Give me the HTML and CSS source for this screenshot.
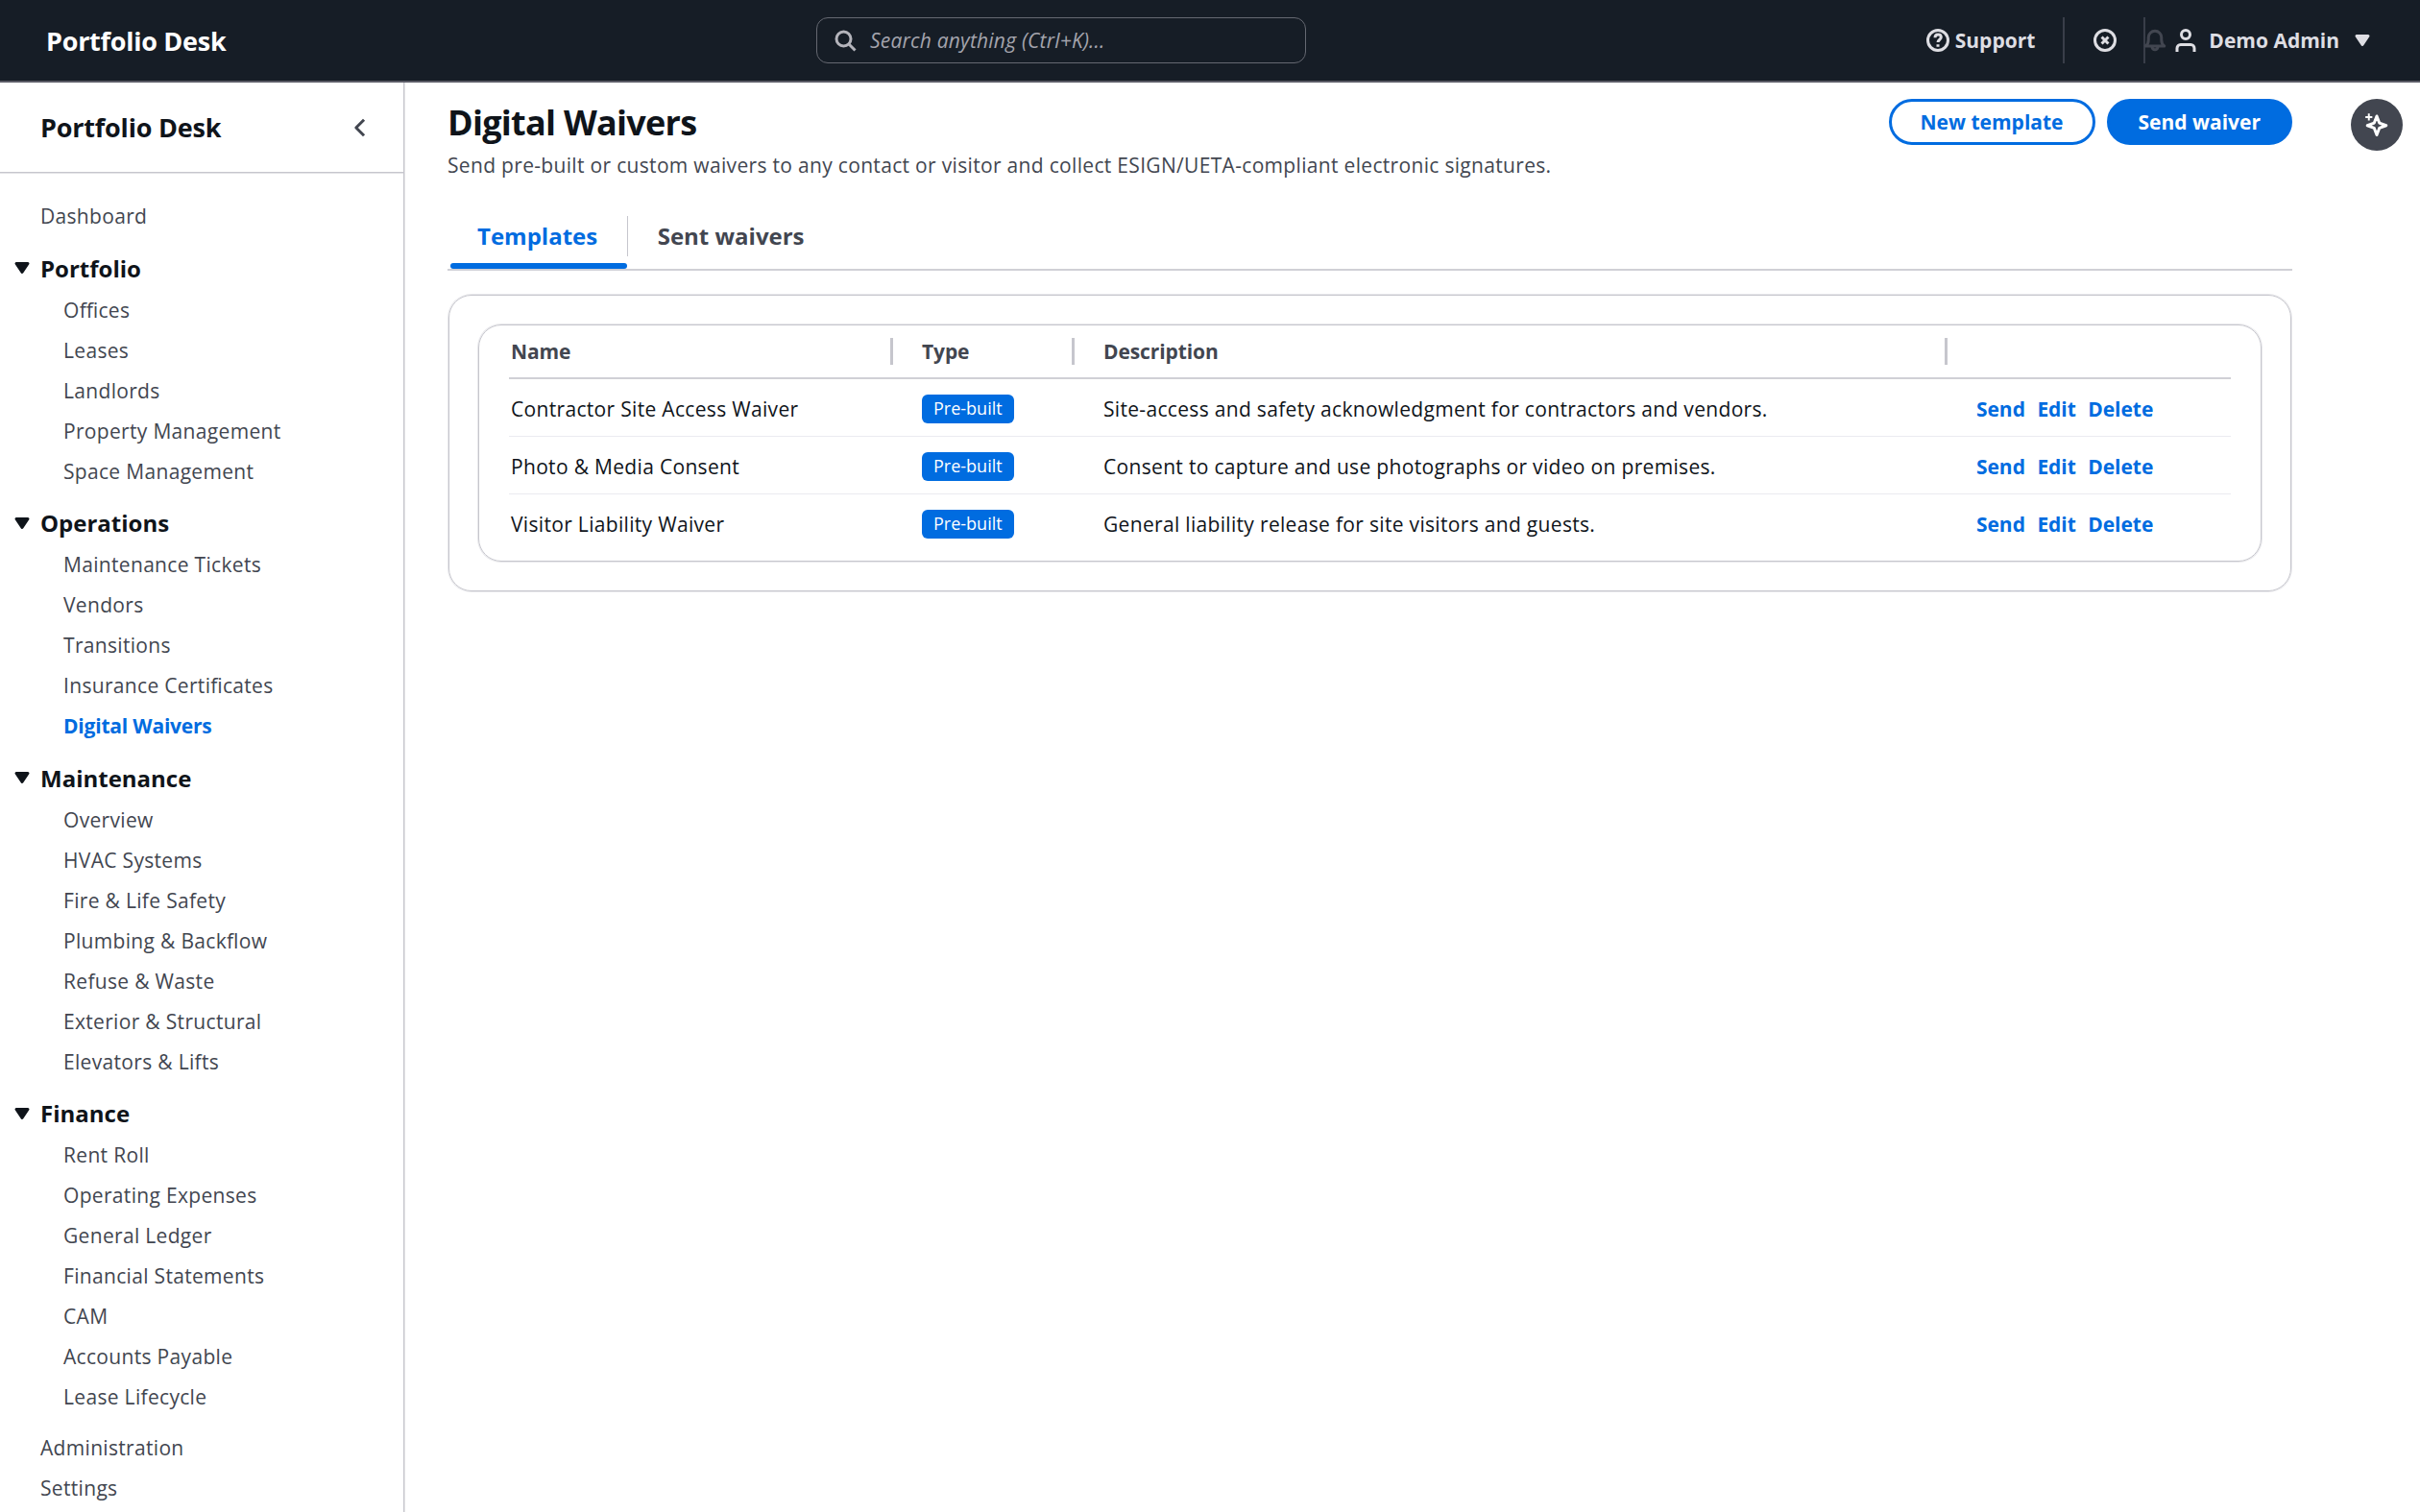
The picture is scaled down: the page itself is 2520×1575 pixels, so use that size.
FILE: index.html
```
<!DOCTYPE html>
<html lang="en">
<head>
    <meta charset="UTF-8">
    <meta name="viewport" content="width=device-width, initial-scale=1.0">
    <title>Digital Waivers - Portfolio Desk</title>
    <link rel="stylesheet" href="styles.css">
</head>
<body>
    <!-- Top bar -->
    <header class="topbar">
        <a class="brand">Portfolio Desk</a>
        <div class="search">
            <svg class="icon" viewBox="0 0 16 16"><circle cx="7" cy="7" r="5"/><path d="M10.5 10.5L15 15"/></svg>
            <span>Search anything (Ctrl+K)...</span>
        </div>
        <div class="utilities">
            <div class="utility support">
                <svg class="icon" viewBox="0 0 16 16"><circle cx="8" cy="8" r="7"/><path d="M6 6.2C6 4.9 6.9 4 8.1 4s2.1.8 2.1 1.9C10.2 7.5 8 7.5 8 9.4M8 10.8v1.7"/></svg>
                <span>Support</span>
            </div>
            <div class="utility close">
                <svg class="icon" viewBox="0 0 16 16"><circle cx="8" cy="8" r="7"/><path d="M5.7 5.7l4.6 4.6M10.3 5.7l-4.6 4.6"/></svg>
            </div>
            <svg class="icon bell" viewBox="0 0 16 16"><path d="M1.500 12h13c-1.400-1-2-2.300-2-4.300V6a4.500 4.500 0 0 0-9 0v1.700c0 2-.6 3.300-2 4.300zM6 12.500a2 2 0 0 0 4 0"/></svg>
            <div class="user">
                <svg class="icon" viewBox="0 0 16 16"><circle cx="8" cy="4" r="3"/><path d="M2 16v-2.500A2.500 2.500 0 0 1 4.500 11h7a2.500 2.500 0 0 1 2.500 2.500V16"/></svg>
                <span>Demo Admin</span>
                <svg class="icon caret" viewBox="0 0 16 16"><path d="M4 5h8l-4 6z"/></svg>
            </div>
        </div>
    </header>

    <div class="layout">
        <!-- Side navigation -->
        <nav class="sidebar">
            <div class="sidebar-header">
                <span>Portfolio Desk</span>
                <svg class="icon" viewBox="0 0 16 16"><path d="M10.7 2.5L5.2 8l5.5 5.5"/></svg>
            </div>
            <div class="menu">
                <a>Dashboard</a>
                <section class="group">
                    <h3><svg class="icon caret" viewBox="0 0 16 16"><path d="M4 5h8l-4 6z"/></svg>Portfolio</h3>
                    <a>Offices</a>
                    <a>Leases</a>
                    <a>Landlords</a>
                    <a>Property Management</a>
                    <a>Space Management</a>
                </section>
                <section class="group">
                    <h3><svg class="icon caret" viewBox="0 0 16 16"><path d="M4 5h8l-4 6z"/></svg>Operations</h3>
                    <a>Maintenance Tickets</a>
                    <a>Vendors</a>
                    <a>Transitions</a>
                    <a>Insurance Certificates</a>
                    <a class="active">Digital Waivers</a>
                </section>
                <section class="group">
                    <h3><svg class="icon caret" viewBox="0 0 16 16"><path d="M4 5h8l-4 6z"/></svg>Maintenance</h3>
                    <a>Overview</a>
                    <a>HVAC Systems</a>
                    <a>Fire &amp; Life Safety</a>
                    <a>Plumbing &amp; Backflow</a>
                    <a>Refuse &amp; Waste</a>
                    <a>Exterior &amp; Structural</a>
                    <a>Elevators &amp; Lifts</a>
                </section>
                <section class="group">
                    <h3><svg class="icon caret" viewBox="0 0 16 16"><path d="M4 5h8l-4 6z"/></svg>Finance</h3>
                    <a>Rent Roll</a>
                    <a>Operating Expenses</a>
                    <a>General Ledger</a>
                    <a>Financial Statements</a>
                    <a>CAM</a>
                    <a>Accounts Payable</a>
                    <a>Lease Lifecycle</a>
                </section>
                <a>Administration</a>
                <a>Settings</a>
            </div>
        </nav>

        <!-- Page content -->
        <main class="content">
            <div class="page-header">
                <div>
                    <h1>Digital Waivers</h1>
                    <p>Send pre-built or custom waivers to any contact or visitor and collect ESIGN/UETA-compliant electronic signatures.</p>
                </div>
                <div class="actions">
                    <button class="button">New template</button>
                    <button class="button primary">Send waiver</button>
                </div>
            </div>
            <div class="tabs">
                <a class="tab selected">Templates</a>
                <a class="tab">Sent waivers</a>
            </div>
            <div class="panel">
                <div class="table-box">
                    <table>
                        <thead>
                            <tr><th class="name">Name</th><th class="type">Type</th><th class="desc">Description</th><th></th></tr>
                        </thead>
                        <tbody>
                            <tr>
                                <td>Contractor Site Access Waiver</td>
                                <td><span class="badge">Pre-built</span></td>
                                <td>Site-access and safety acknowledgment for contractors and vendors.</td>
                                <td><div class="links"><a>Send</a><a>Edit</a><a>Delete</a></div></td>
                            </tr>
                            <tr>
                                <td>Photo &amp; Media Consent</td>
                                <td><span class="badge">Pre-built</span></td>
                                <td>Consent to capture and use photographs or video on premises.</td>
                                <td><div class="links"><a>Send</a><a>Edit</a><a>Delete</a></div></td>
                            </tr>
                            <tr>
                                <td>Visitor Liability Waiver</td>
                                <td><span class="badge">Pre-built</span></td>
                                <td>General liability release for site visitors and guests.</td>
                                <td><div class="links"><a>Send</a><a>Edit</a><a>Delete</a></div></td>
                            </tr>
                        </tbody>
                    </table>
                </div>
            </div>
        </main>

        <aside class="tools">
            <button class="assistant">
                <svg class="icon" viewBox="0 0 16 16"><path d="M8 2l1.800 4.700 4.700 1.800-4.700 1.800L8 15l-1.800-4.700L1.500 8.500l4.700-1.800z"/><path class="spark" d="M2.500.2V5M.1 2.600h4.800"/></svg>
            </button>
        </aside>
    </div>
</body>
</html>
```
FILE: styles.css
```
* {
    box-sizing: border-box;
}
body {
    margin: 0;
    height: 1575px;
    overflow: hidden;
    display: flex;
    flex-direction: column;
    font-family: "Open Sans", "Noto Sans", sans-serif;
    font-size: 21px;
    line-height: 30px;
    letter-spacing: 0.32px;
    font-feature-settings: "liga";
    color: #0f141a;
    background-color: #fff;
}
h1, h3, p {
    margin: 0;
}
button {
    font: inherit;
}
.icon {
    display: block;
    flex: none;
    width: 24px;
    height: 24px;
    fill: none;
    stroke: currentColor;
    stroke-width: 2;
    stroke-linejoin: round;
}
.icon.caret {
    fill: currentColor;
}

/* Top bar */
.topbar {
    flex: none;
    display: grid;
    grid-template-columns: 802px 510px 1fr;
    align-items: center;
    height: 86px;
    padding: 0 48px;
    background-color: #161d26;
    border-bottom: 2px solid #5a5b66;
    color: #dedee3;
}
.brand {
    padding-top: 1px;
    font-size: 27px;
    font-weight: 700;
    letter-spacing: -0.01em;
    color: #fff;
}
.search {
    display: flex;
    align-items: center;
    gap: 14px;
    height: 48px;
    padding: 0 17px;
    border: 1px solid #656871;
    border-radius: 12px;
    font-style: italic;
    letter-spacing: 0.2px;
    color: #a4a4ad;
}
.search .icon {
    color: #b4b4bb;
}
.utilities {
    display: flex;
    justify-content: flex-end;
    align-items: center;
    font-weight: 700;
    letter-spacing: 0;
}
.utility {
    display: flex;
    align-items: center;
    gap: 6px;
    height: 48px;
    border-right: 2px solid #393e49;
}
.support {
    padding-right: 29px;
}
.close {
    padding: 0 28.5px 0 29.5px;
}
.bell {
    margin-left: -2px;
    color: #424650;
}
.user {
    display: flex;
    align-items: center;
    gap: 12px;
    margin-left: 8px;
}

/* Side navigation */
.layout {
    flex: 1;
    display: flex;
    min-height: 0;
}
.sidebar {
    flex: none;
    width: 421px;
    margin-right: 1px;
    border-right: 1px solid #c6c6cd;
    box-shadow: 1px 0 #e3e3e6;
}
.sidebar-header {
    display: flex;
    justify-content: space-between;
    align-items: center;
    height: 94px;
    margin-bottom: 1px;
    padding: 0 33px 0 42px;
    border-bottom: 1px solid #c6c6cd;
    box-shadow: 0 1px #e3e3e6;
    font-size: 27px;
    font-weight: 700;
    letter-spacing: -0.2px;
}
.sidebar-header .icon {
    color: #424650;
}
.menu {
    display: flex;
    flex-direction: column;
    gap: 12px;
    padding: 29px 42px 0;
    color: #424650;
}
.menu a {
    display: block;
}
.group {
    display: flex;
    flex-direction: column;
    gap: 12px;
    margin: 10.5px 0;
    padding-left: 24px;
}
.group + .group {
    margin-top: 0;
}
.group h3 {
    display: flex;
    align-items: center;
    gap: 7.5px;
    margin-left: -55.5px;
    font-size: 24px;
    line-height: 33px;
    letter-spacing: 0;
    color: #0f141a;
}
.menu .active {
    font-weight: 700;
    letter-spacing: -0.2px;
    color: #006ce0;
}

/* Page content */
.content {
    flex: 1;
    padding: 17px 0 0 44px;
}
.page-header {
    display: flex;
    justify-content: space-between;
    align-items: flex-start;
}
.page-header h1 {
    padding-top: 2px;
    font-size: 36px;
    line-height: 45px;
    letter-spacing: -0.02em;
}
.page-header p {
    margin-top: 7px;
    color: #424650;
}
.actions {
    display: flex;
    gap: 12px;
}
.button {
    height: 48px;
    padding: 0 30px 1px;
    border: 3px solid #006ce0;
    border-radius: 30px;
    background-color: #fff;
    font-weight: 700;
    letter-spacing: 0;
    color: #006ce0;
}
.button.primary {
    background-color: #006ce0;
    color: #fff;
}
.tabs {
    display: flex;
    margin-top: 25px;
    border-bottom: 2px solid #d0d0d6;
}
.tab {
    position: relative;
    padding: 19px 31.5px 19px 31px;
    font-size: 24px;
    line-height: 30px;
    font-weight: 700;
    letter-spacing: 0;
    color: #424650;
}
.tab.selected {
    color: #006ce0;
}
.tab.selected::before {
    content: "";
    position: absolute;
    right: 0;
    top: 13px;
    height: 42px;
    border-right: 1px solid #c6c6cd;
}
.tab.selected::after {
    content: "";
    position: absolute;
    left: 3px;
    right: 1px;
    bottom: 0;
    height: 6px;
    border-radius: 3px;
    background-color: #006ce0;
}
.panel {
    margin: 25px 1px 0;
    padding: 30px;
    border: 1px solid #c6c6cd;
    border-radius: 24px;
    box-shadow: 0 0 0 1px #e8e8eb;
}
.table-box {
    height: 247px;
    padding: 0 31px;
    border: 1px solid #c6c6cd;
    border-radius: 24px;
    box-shadow: 0 0 0 1px #e8e8eb;
}
table {
    width: 100%;
    table-layout: fixed;
    border-collapse: collapse;
    text-align: left;
}
th {
    position: relative;
    height: 55px;
    padding: 0 3px 0 30px;
    border-bottom: 2px solid #d0d0d6;
    letter-spacing: -0.1px;
    color: #424650;
}
th:not(:last-child)::after {
    content: "";
    position: absolute;
    right: 0;
    top: 13px;
    width: 3px;
    height: 28px;
    background-color: #c6c6cd;
}
td {
    height: 60px;
    padding: 4px 0 0 30px;
}
th:first-child, td:first-child {
    padding-left: 2px;
}
tbody tr:not(:last-child) td {
    border-bottom: 1.5px solid #ebebf0;
}
.name {
    width: 400px;
}
.type {
    width: 189px;
}
.desc {
    width: 909px;
}
.badge {
    display: block;
    width: max-content;
    padding: 0 12px 2px;
    border-radius: 6px;
    background-color: #006ce0;
    font-size: 18px;
    line-height: 28px;
    letter-spacing: 0;
    color: #fff;
}
.links {
    display: flex;
    gap: 12.5px;
    font-weight: 700;
    letter-spacing: -0.05px;
    color: #006ce0;
}

/* Right rail */
.tools {
    flex: none;
    width: 133px;
    padding: 17px 18px;
    display: flex;
    justify-content: flex-end;
}
.assistant {
    display: flex;
    align-items: center;
    justify-content: center;
    width: 54px;
    height: 54px;
    padding: 0;
    border: none;
    border-radius: 50%;
    background-color: #424650;
    color: #fff;
}
.spark {
    stroke-width: 1.3;
}
```
